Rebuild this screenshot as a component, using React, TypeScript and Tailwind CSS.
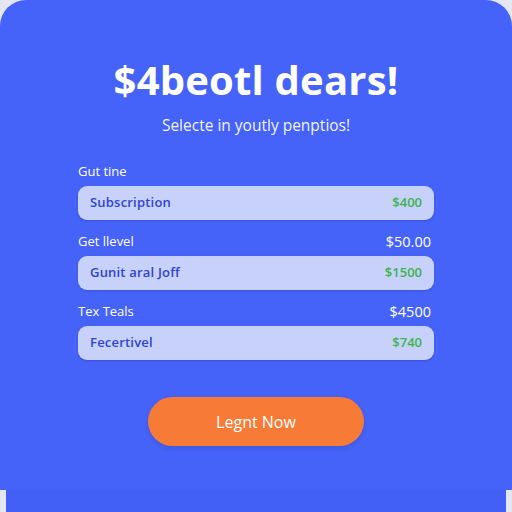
const rows = [
  { label: "Gut tine", total: "", name: "Subscription", price: "$400" },
  { label: "Get llevel", total: "$50.00", name: "Gunit aral Joff", price: "$1500" },
  { label: "Tex Teals", total: "$4500", name: "Fecertivel", price: "$740" },
];

const App = () => {
  return (
    <div className="w-[512px] h-[512px] bg-[#e4e7f2] flex flex-col overflow-hidden" style={{ fontFamily: '"Open Sans", "Liberation Sans", sans-serif' }}>
      <div className="h-[490px] w-full shrink-0 bg-[#4563f9] rounded-t-[26px] flex flex-col items-center">
        <h1 className="mt-[56px] text-[40px] leading-[48px] font-bold text-white tracking-[0.2px]">$4beotl dears!</h1>
        <p className="mt-[11px] text-[15.5px] leading-[20px] text-white/95">Selecte in youtly penptios!</p>

        <div className="mt-[27px] w-[356px] flex flex-col">
          {rows.map((row, i) => (
            <div key={row.label} className={i === 0 ? "" : "mt-[12px]"}>
              <div className="flex justify-between items-center h-[20px] text-[13px] text-white">
                <span>{row.label}</span>
                <span className="text-[14.5px] pr-[3px]">{row.total}</span>
              </div>
              <div className="mt-[4px] h-[34px] rounded-[9px] bg-[#c8d1f9] flex items-center justify-between px-[12px] shadow-[0_1px_2px_rgba(30,40,120,0.25)]">
                <span className="text-[13px] font-semibold text-[#2c45d4] tracking-[0.2px]">{row.name}</span>
                <span className="text-[13px] font-semibold text-[#3cb451]">{row.price}</span>
              </div>
            </div>
          ))}
        </div>

        <button className="mt-[37px] w-[216px] h-[49px] rounded-full bg-[#f77a36] text-white text-[16px] shadow-[0_2px_4px_rgba(40,40,120,0.2)]">
          Legnt Now
        </button>
      </div>
      <div className="mx-[6px] h-[22px] bg-[#4360f6]" />
    </div>
  );
};

export default App;
